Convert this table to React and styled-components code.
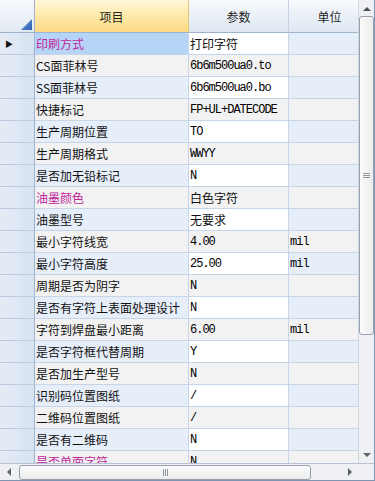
import React from 'react';
import styled, { createGlobalStyle, css } from 'styled-components';

const GlobalStyle = createGlobalStyle`
  body {
    margin: 0;
    background: #ffffff;
    font-family: "Noto Sans CJK SC", "Liberation Sans", sans-serif;
  }
`;

const rows = [
  { name: '印刷方式', value: '打印字符', cjk: true, mark: true, current: true },
  { name: 'CS面菲林号', value: '6b6m500ua0.to' },
  { name: 'SS面菲林号', value: '6b6m500ua0.bo' },
  { name: '快捷标记', value: 'FP+UL+DATECODE' },
  { name: '生产周期位置', value: 'TO' },
  { name: '生产周期格式', value: 'WWYY' },
  { name: '是否加无铅标记', value: 'N' },
  { name: '油墨颜色', value: '白色字符', cjk: true, mark: true },
  { name: '油墨型号', value: '无要求', cjk: true },
  { name: '最小字符线宽', value: '4.00', unit: 'mil' },
  { name: '最小字符高度', value: '25.00', unit: 'mil' },
  { name: '周期是否为阴字', value: 'N' },
  { name: '是否有字符上表面处理设计', value: 'N' },
  { name: '字符到焊盘最小距离', value: '6.00', unit: 'mil' },
  { name: '是否字符框代替周期', value: 'Y' },
  { name: '是否加生产型号', value: 'N' },
  { name: '识别码位置图纸', value: '/' },
  { name: '二维码位置图纸', value: '/' },
  { name: '是否有二维码', value: 'N' },
  { name: '是否单面字符', value: 'N', mark: true },
];

const COLS = '35px 154px 100px 82px';

const Frame = styled.div`
  width: 375px;
  height: 481px;
  box-sizing: border-box;
  border-right: 1px solid #7f96b3;
  border-bottom: 1px solid #7f96b3;
  display: grid;
  grid-template-columns: 1fr 16px;
  grid-template-rows: 1fr 17px;
  overflow: hidden;
  background: #ffffff;
`;

const Viewport = styled.div`
  overflow: hidden;
  min-width: 0;
  min-height: 0;
`;

const HeaderRow = styled.div`
  display: grid;
  grid-template-columns: ${COLS};
  height: 33px;
`;

const HeadCell = styled.div`
  box-sizing: border-box;
  display: flex;
  align-items: center;
  justify-content: center;
  font-size: 12px;
  color: #1e1e1e;
  border-right: 1px solid #c4d2e3;
  border-bottom: 1px solid #9fb3cd;
  background: linear-gradient(#f7f9fc, #e9eff7 55%, #dfe7f1);
  ${p => p.$active && css`
    background: linear-gradient(#fff6d8, #fee9a9 50%, #fcd982);
    border-right-color: #e3c57c;
  `}
`;

const Corner = styled.div`
  box-sizing: border-box;
  position: relative;
  border-right: 1px solid #9fb3cd;
  border-bottom: 1px solid #9fb3cd;
  background: linear-gradient(#f6f8fb, #e3eaf3);
`;

const SortMark = styled.div`
  position: absolute;
  right: 2px;
  bottom: 2px;
  width: 11px;
  height: 11px;
  background: linear-gradient(135deg, #6e9ad8, #2f5fb0);
  clip-path: polygon(100% 0, 100% 100%, 0 100%);
`;

const Row = styled.div`
  display: grid;
  grid-template-columns: ${COLS};
  height: 22px;
`;

const RowHead = styled.div`
  box-sizing: border-box;
  display: flex;
  align-items: center;
  padding-left: 5px;
  border-right: 1px solid #9fb3cd;
  border-bottom: 1px solid #bccbe0;
  background: linear-gradient(90deg, #e4ebf5, #d8e3f1);
  font-size: 8px;
  color: #111;
`;

const Cell = styled.div`
  box-sizing: border-box;
  display: flex;
  align-items: center;
  padding-left: 1px;
  white-space: nowrap;
  overflow: hidden;
  border-right: 1px solid #c6d5e8;
  border-bottom: 1px solid #c6d5e8;
  background: ${p => (p.$odd ? '#e6eefa' : '#f2f2f2')};
  color: ${p => (p.$mark ? '#c0279b' : '#111111')};
  font-size: 12px;
  ${p => p.$editable && p.$odd && css`
    background: #ffffff;
  `}
  ${p => p.$selected && css`
    background: #b6d4f6;
  `}
  ${p => p.$mono && css`
    font-family: "Liberation Mono", "DejaVu Sans Mono", monospace;
    font-size: 12px;
    letter-spacing: -1px;
    color: #000000;
  `}
`;

const VScroll = styled.div`
  box-sizing: border-box;
  display: flex;
  flex-direction: column;
  align-items: center;
  background: #eef0f3;
  border-left: 1px solid #d2d8e0;
`;

const HScroll = styled.div`
  box-sizing: border-box;
  display: flex;
  align-items: center;
  background: #eef0f3;
  border-top: 1px solid #b7c3d3;
`;

const ScrollCorner = styled.div`
  background: #eef0f3;
  border-top: 1px solid #b7c3d3;
`;

const Arrow = styled.div`
  width: 0;
  height: 0;
  flex: none;
  ${p => p.$dir === 'up' && css`
    margin: 7px 0 5px;
    border-left: 4px solid transparent;
    border-right: 4px solid transparent;
    border-bottom: 4px solid #4a4f57;
  `}
  ${p => p.$dir === 'down' && css`
    margin: auto 0 6px;
    border-left: 4px solid transparent;
    border-right: 4px solid transparent;
    border-top: 4px solid #5d636b;
  `}
  ${p => p.$dir === 'left' && css`
    margin: 0 6px 0 7px;
    border-top: 4px solid transparent;
    border-bottom: 4px solid transparent;
    border-right: 4px solid #5d636b;
  `}
  ${p => p.$dir === 'right' && css`
    margin: 0 6px 0 auto;
    border-top: 4px solid transparent;
    border-bottom: 4px solid transparent;
    border-left: 4px solid #5d636b;
  `}
`;

const Thumb = styled.div`
  box-sizing: border-box;
  display: flex;
  align-items: center;
  justify-content: center;
  border: 1px solid #97a1ae;
  border-radius: 3px;
  ${p => p.$vertical ? css`
    width: 15px;
    height: 319px;
    background: linear-gradient(90deg, #fbfbfb, #ececed);
  ` : css`
    width: 292px;
    height: 15px;
    margin-left: 2px;
    background: linear-gradient(#fbfbfb, #ececed);
  `}
`;

const Grip = styled.div`
  display: flex;
  flex-direction: ${p => (p.$vertical ? 'column' : 'row')};
  gap: 1px;
  span {
    background: #8e959e;
    width: ${p => (p.$vertical ? '7px' : '1px')};
    height: ${p => (p.$vertical ? '1px' : '7px')};
  }
`;

export default function App() {
  return (
    <>
      <GlobalStyle />
      <Frame>
        <Viewport>
          <HeaderRow>
            <Corner><SortMark /></Corner>
            <HeadCell $active>项目</HeadCell>
            <HeadCell>参数</HeadCell>
            <HeadCell>单位</HeadCell>
          </HeaderRow>
          {rows.map((r, i) => {
            const odd = i % 2 === 0;
            return (
              <Row key={r.name}>
                <RowHead>{r.current ? '▶' : ''}</RowHead>
                <Cell $odd={odd} $mark={r.mark} $selected={r.current}>{r.name}</Cell>
                <Cell $odd={odd} $editable $mono={!r.cjk}>{r.value}</Cell>
                <Cell $odd={odd} $mono>{r.unit || ''}</Cell>
              </Row>
            );
          })}
        </Viewport>
        <VScroll>
          <Arrow $dir="up" />
          <Thumb $vertical>
            <Grip $vertical><span /><span /><span /></Grip>
          </Thumb>
          <Arrow $dir="down" />
        </VScroll>
        <HScroll>
          <Arrow $dir="left" />
          <Thumb>
            <Grip><span /><span /><span /></Grip>
          </Thumb>
          <Arrow $dir="right" />
        </HScroll>
        <ScrollCorner />
      </Frame>
    </>
  );
}
